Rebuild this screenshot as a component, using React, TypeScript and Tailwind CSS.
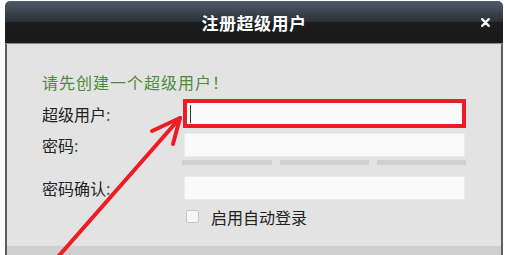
import React from "react";

export default function App() {
  return (
    <div className="relative w-[507px] h-[255px] bg-white overflow-hidden font-['Noto_Sans_CJK_SC','Noto_Sans',sans-serif]">
      <div className="ml-[5px] mt-[1px] w-[498px] h-[254px] flex flex-col">
        {/* header */}
        <div className="h-[42px] rounded-t-[5px] grid grid-cols-[1fr_auto_1fr] items-center bg-[linear-gradient(to_bottom,#505a67_0%,#3a414b_30%,#2b3038_49%,#1c1c1c_50%,#1a1a1a_100%)]">
          <div />
          <div className="text-white text-[17px] font-bold leading-none tracking-[0.5px]">注册超级用户</div>
          <div className="flex justify-end pr-[13px]">
            <svg width="9" height="9" viewBox="0 0 9 9">
              <path d="M1.2 1.2 L7.8 7.8 M7.8 1.2 L1.2 7.8" stroke="#f2f2f2" strokeWidth="2.4" strokeLinecap="round" />
            </svg>
          </div>
        </div>
        <div className="h-px bg-[#8a8a8a]" />
        {/* body */}
        <div className="flex-1 flex flex-col border-x-2 border-[#5e5e5e]">
          <div className="flex-1 bg-[#e3e3e3] pl-[35px] pt-[28px] flex flex-col">
            <div className="h-[20px] leading-[20px] text-[16px] tracking-[1px] text-[#4f8a3d]">请先创建一个超级用户！</div>
            {/* row 1 */}
            <div className="mt-[7px] h-[29px] flex items-center">
              <div className="w-[141px] text-[16px] text-[#222] leading-none">超级用户<span className="text-[#555]">:</span></div>
              <div className="w-[283px] h-[29px] border-[4px] border-[#ee1c25] bg-[#fafafa] flex items-center">
                <div className="ml-[3px] w-px h-[18px] bg-[#333]" />
              </div>
            </div>
            {/* row 2 */}
            <div className="mt-[5px] h-[24px] flex items-center">
              <div className="w-[142px] text-[16px] text-[#222] leading-none">密码<span className="text-[#555]">:</span></div>
              <div className="w-[281px] h-[24px] border border-[#ebebeb] bg-[#fafafa]" />
            </div>
            {/* strength bars */}
            <div className="mt-[3px] ml-[140px] flex gap-[8px]">
              <div className="w-[90px] h-[5px] bg-[#cfcfcf]" />
              <div className="w-[89px] h-[5px] bg-[#cfcfcf]" />
              <div className="w-[89px] h-[5px] bg-[#cfcfcf]" />
            </div>
            {/* row 3 */}
            <div className="mt-[11px] h-[24px] flex items-center">
              <div className="w-[142px] text-[16px] text-[#222] leading-none">密码确认<span className="text-[#555]">:</span></div>
              <div className="w-[281px] h-[24px] border border-[#ebebeb] bg-[#fafafa]" />
            </div>
            {/* checkbox */}
            <div className="mt-[10px] ml-[144px] flex items-center h-[13px]">
              <div className="w-[13px] h-[13px] rounded-[2px] border border-[#c4c4c4] bg-[#f6f6f6]" />
              <div className="ml-[12px] text-[16px] text-[#222] leading-none">启用自动登录</div>
            </div>
          </div>
          <div className="h-[9px] bg-[#cfcfcf]" />
        </div>
      </div>
      {/* annotation arrow */}
      <svg className="absolute inset-0 pointer-events-none" width="507" height="255" viewBox="0 0 507 255">
        <g stroke="#f01c24" strokeWidth="4" strokeLinecap="round" fill="none">
          <path d="M57 258 L180 118" />
          <path d="M180 118 L152 131" />
          <path d="M180 118 L173 144" />
        </g>
      </svg>
    </div>
  );
}
